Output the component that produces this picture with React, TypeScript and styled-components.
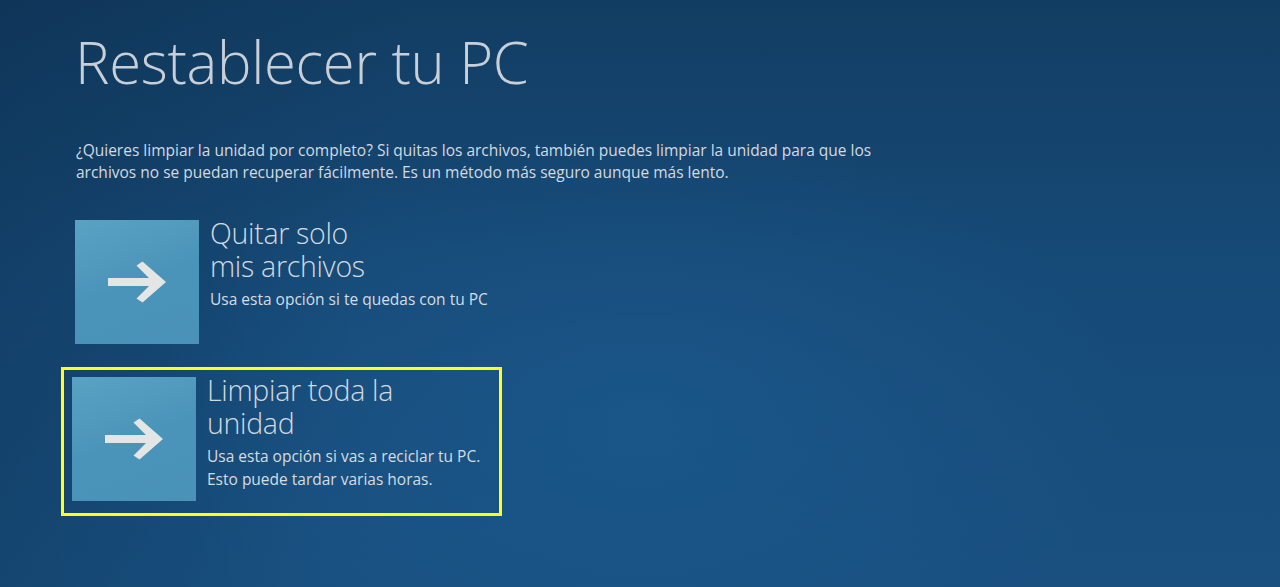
import React from "react";
import styled, { createGlobalStyle } from "styled-components";

const GlobalStyle = createGlobalStyle`
	html, body {
		margin: 0;
		padding: 0;
		width: 100%;
		height: 100%;
		overflow: hidden;
	}
	body {
		font-family: "Open Sans", "Noto Sans", sans-serif;
	}
`;

type Option = {
	title: string[];
	text: string[];
	selected?: boolean;
};

const options: Option[] = [
	{
		title: ["Quitar solo", "mis archivos"],
		text: ["Usa esta opción si te quedas con tu PC"],
	},
	{
		title: ["Limpiar toda la", "unidad"],
		text: ["Usa esta opción si vas a reciclar tu PC.", "Esto puede tardar varias horas."],
		selected: true,
	},
];

const Arrow = () => (
	<svg width="62" height="42" viewBox="0 0 62 42">
		<path
			d="M2 17 H43 L30.5 4.5 L36.5 0.5 L60 21 L36.5 41.5 L30.5 37.5 L43 25 H2 Z"
			fill="#e4e6e6"
		/>
	</svg>
);

const App: React.FC = () => {
	return (
		<>
			<GlobalStyle />
			<Screen>
				<Title>Restablecer tu PC</Title>
				<Intro>
					¿Quieres limpiar la unidad por completo? Si quitas los archivos, también puedes limpiar la unidad para que los
					<br />
					archivos no se puedan recuperar fácilmente. Es un método más seguro aunque más lento.
				</Intro>
				<List>
					{options.map((o) => (
						<Item key={o.title[0]} selected={o.selected}>
							<Tile>
								<Arrow />
							</Tile>
							<Info>
								<ItemTitle>
									{o.title.map((t) => (
										<div key={t}>{t}</div>
									))}
								</ItemTitle>
								<ItemText>
									{o.text.map((t) => (
										<div key={t}>{t}</div>
									))}
								</ItemText>
							</Info>
						</Item>
					))}
				</List>
			</Screen>
		</>
	);
};

export default App;

const Screen = styled.div`
	width: 1280px;
	height: 587px;
	box-sizing: border-box;
	padding: 22px 0 0 75px;
	color: #cfd6dd;
	background:
		radial-gradient(ellipse 700px 420px at 640px 420px, rgba(30, 95, 150, 0.5), transparent 70%),
		linear-gradient(100deg, rgba(10, 40, 70, 0.35) 0%, transparent 30%),
		linear-gradient(180deg, #123d63 0%, #164a77 45%, #185080 100%);
`;

const Title = styled.h1`
	margin: 0;
	font-family: "Open Sans", sans-serif;
	font-weight: 300;
	font-size: 58px;
	line-height: 80px;
	color: #c9cfd7;
	letter-spacing: -0.3px;
`;

const Intro = styled.p`
	margin: 37px 0 0 1px;
	font-size: 15.5px;
	line-height: 22px;
	color: #d4dae0;
	letter-spacing: 0;
`;

const List = styled.div`
	display: flex;
	flex-direction: column;
	gap: 23px;
	margin-top: 37px;
`;

const Item = styled.div<{ selected?: boolean }>`
	display: flex;
	align-items: flex-start;
	gap: 11px;
	width: 441px;
	box-sizing: border-box;
	${(p) =>
		p.selected
			? `
		margin-left: -14px;
		border: 3px solid #ffff1a;
		padding: 7px 8px 12px;
	`
			: ""}
`;

const Tile = styled.div`
	width: 124px;
	height: 124px;
	flex-shrink: 0;
	display: flex;
	align-items: center;
	justify-content: center;
	background: linear-gradient(160deg, #5aa2c4 0%, #4b94b9 50%, #4a92b8 100%);
`;

const Info = styled.div`
	display: flex;
	flex-direction: column;
	margin-top: -3px;
`;

const ItemTitle = styled.div`
	font-weight: 300;
	font-size: 28.5px;
	line-height: 33px;
	color: #d3d9df;
	letter-spacing: -0.3px;
`;

const ItemText = styled.div`
	margin-top: 5px;
	font-size: 15.5px;
	line-height: 23px;
	color: #d6dce1;
	letter-spacing: 0;
`;
